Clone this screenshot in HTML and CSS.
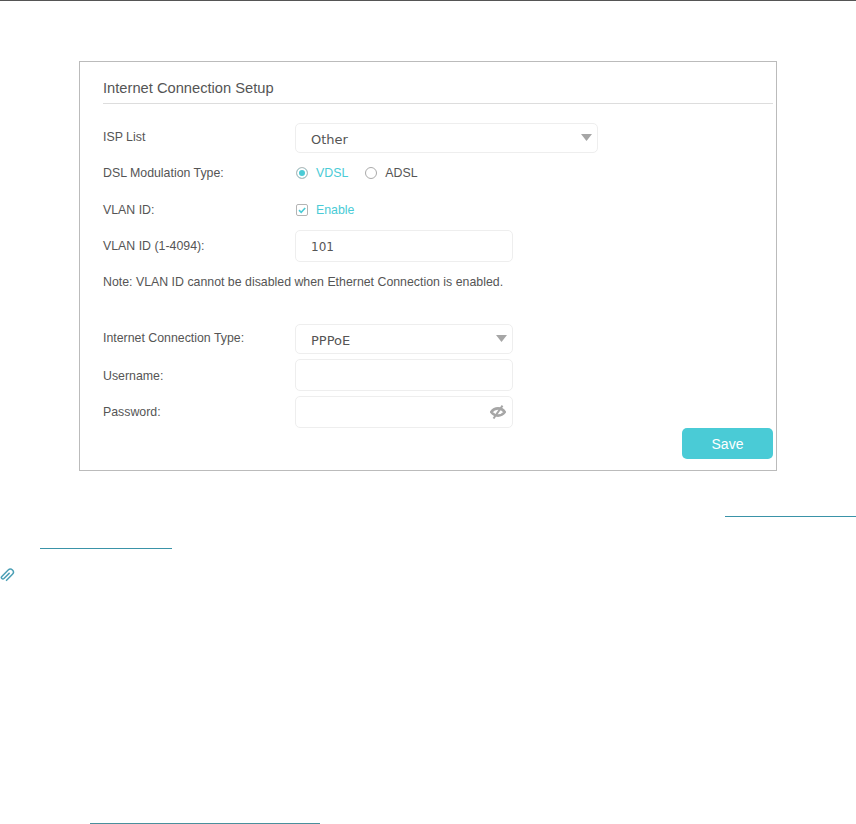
FILE: index.html
```html
<!DOCTYPE html>
<html lang="en">
<head>
<meta charset="utf-8">
<title>Internet Connection Setup</title>
<link rel="stylesheet" href="styles.css">
</head>
<body>
<div class="topline"></div>
<section class="card">
  <h2 class="title">Internet Connection Setup</h2>
  <div class="row row-isp">
    <span class="label">ISP List</span>
    <div class="field field-wide">
      <span class="value value-other">Other</span>
      <svg class="caret" width="11" height="7" viewBox="0 0 11 7"><path d="M0 0h11L5.500 7z"/></svg>
    </div>
  </div>
  <div class="row row-dsl">
    <span class="label">DSL Modulation Type:</span>
    <div class="choices">
      <span class="radio radio-on"></span><span class="choice-on">VDSL</span>
      <span class="radio radio-off"></span><span class="choice-off">ADSL</span>
    </div>
  </div>
  <div class="row row-vlan">
    <span class="label">VLAN ID:</span>
    <div class="choices">
      <svg class="check" width="12" height="12" viewBox="0 0 12 12"><rect x=".5" y=".5" width="11" height="11" rx="1.500" fill="#fff" stroke="#b4b4b4"/><path d="M3 6.200l2.200 2.100L9.200 4" fill="none" stroke="#4acbd6" stroke-width="1.600"/></svg>
      <span class="choice-on">Enable</span>
    </div>
  </div>
  <div class="row row-id">
    <span class="label">VLAN ID (1-4094):</span>
    <div class="field field-mid field-tall"><span class="value value-num">101</span></div>
  </div>
  <p class="note">Note: VLAN ID cannot be disabled when Ethernet Connection is enabled.</p>
  <div class="row row-type">
    <span class="label">Internet Connection Type:</span>
    <div class="field field-mid">
      <span class="value value-pppoe">PPPoE</span>
      <svg class="caret" width="11" height="7" viewBox="0 0 11 7"><path d="M0 0h11L5.500 7z"/></svg>
    </div>
  </div>
  <div class="row row-user">
    <span class="label">Username:</span>
    <div class="field field-mid field-tall"></div>
  </div>
  <div class="row row-pass">
    <span class="label">Password:</span>
    <div class="field field-mid field-tall">
      <svg class="eye" width="16" height="14" viewBox="0 0 16 14"><path d="M1.200 7C3 4.600 5.300 3.400 8 3.400s5 1.200 6.800 3.600c-1.800 2.400-4.100 3.600-6.800 3.600S3 9.400 1.200 7z" fill="none" stroke="#a6a6a6" stroke-width="2.600"/><path d="M3.500 13.500L12.500.7" stroke="#a6a6a6" stroke-width="2"/></svg>
    </div>
  </div>
  <div class="actions"><button class="save" type="button">Save</button></div>
</section>
<div class="link-line link-one"></div>
<div class="link-line link-two"></div>
<svg class="clip" width="15" height="15" viewBox="0 0 15 15"><path transform="rotate(45 7.500 7)" d="M7.500 4v8a1.500 1.500 0 0 1-3 0V3a3 3 0 0 1 6 0v9" fill="none" stroke="#4b9fb5" stroke-width="1.500"/></svg>
<div class="link-line link-three"></div>
</body>
</html>
```
FILE: styles.css
```css
* { box-sizing: border-box; }
html, body { margin: 0; padding: 0; background: #fff; }
body {
  height: 824px;
  overflow: hidden;
  font-family: "Liberation Sans", Arial, sans-serif;
  font-size: 12.350px;
  color: #555;
}
.topline { height: 1px; background: #555; }
.card {
  width: 698px;
  height: 410px;
  margin: 60px 0 0 79px;
  padding: 0 3px 0 23px;
  border: 1px solid #bbb;
}
.title {
  margin: 0;
  height: 42px;
  padding-top: 17px;
  font-size: 14.700px;
  line-height: 18px;
  font-weight: 400;
  color: #555;
  border-bottom: 1px solid #ddd;
}
.row { display: flex; align-items: center; }
.label { width: 192px; flex: none; }
.row-isp { margin-top: 19px; height: 30px; }
.row-dsl { margin-top: 10px; height: 20px; }
.row-vlan { margin-top: 17px; height: 20px; }
.row-id { margin-top: 10px; height: 32px; }
.row-type { margin-top: 0; height: 30px; }
.row-user { margin-top: 5px; height: 32px; }
.row-pass { margin-top: 5px; height: 32px; }
.row-isp .label, .row-type .label { padding-bottom: 2px; }
.row-user .label { padding-top: 1px; }
.note { margin: 10px 0 32px; height: 20px; line-height: 20px; }
.field {
  height: 30px;
  border: 1px solid #eee;
  border-radius: 5px;
  display: flex;
  align-items: center;
  justify-content: space-between;
  padding: 0 9px 0 15px;
}
.field-wide { width: 303px; }
.field-mid { width: 218px; }
.field-tall { height: 32px; }
.value { font-family: "DejaVu Sans", sans-serif; color: #555; padding-top: 2px; }
.value-other { font-size: 13px; }
.value-num { font-size: 12px; }
.value-pppoe { font-size: 13px; }
.caret { fill: #a6a6a6; flex: none; margin: 0 -4px 2px 0; }
.eye { margin-left: auto; margin-right: -3px; }
.choices { display: flex; align-items: center; padding-left: 1px; }
.radio {
  width: 12px;
  height: 12px;
  border-radius: 50%;
  border: 1px solid #aaa;
  flex: none;
  background: #fff;
}
.radio-on { border-color: #bbb; background: #4acbd6; box-shadow: inset 0 0 0 2px #fff; }
.radio-off { margin-left: 17px; }
.choice-on { color: #4acbd6; margin-left: 8px; }
.choice-off { color: #555; margin-left: 8px; }
.check { flex: none; }
.actions { display: flex; justify-content: flex-end; }
.save {
  width: 91px;
  height: 31px;
  border: 0;
  border-radius: 5px;
  background: #4acbd6;
  color: #fff;
  font: 400 14px "Liberation Sans", Arial, sans-serif;
  padding: 0;
}
.link-line { height: 1px; background: #3a93a8; }
.link-one { margin: 45px 0 0 725px; width: 131px; }
.link-two { margin: 31px 0 0 40px; width: 132px; }
.clip { display: block; margin: 19px 0 0 0; }
.link-three { margin: 240px 0 0 90px; width: 230px; background: #4a8f9c; }
```
